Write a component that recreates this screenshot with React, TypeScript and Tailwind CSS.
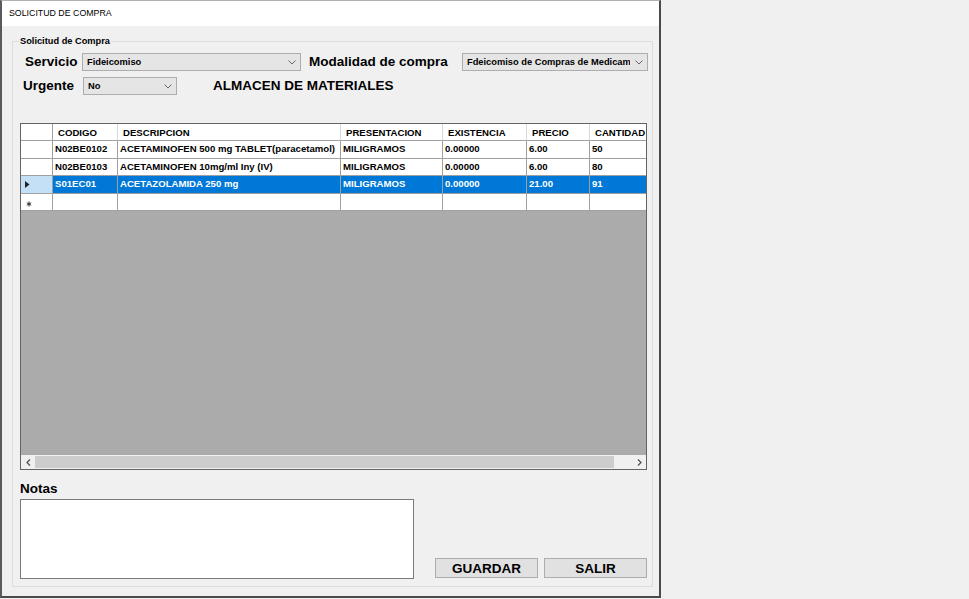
import React from "react";

const COLS = "grid grid-cols-[32px_65px_223px_102px_84px_63px_56px]";

function Chevron() {
  return (
    <svg width="8" height="5" viewBox="0 0 8 5" className="shrink-0">
      <polyline points="0.5,0.5 4,4 7.5,0.5" fill="none" stroke="#666" strokeWidth="1" />
    </svg>
  );
}

function Combo({ text, className }: { text: string; className: string }) {
  return (
    <div className={"h-[18px] border border-[#adadad] bg-[#e5e5e5] flex items-center pl-[4px] pr-[4px] " + className}>
      <span className="flex-1 mr-[5px] overflow-hidden whitespace-nowrap text-[9.3px] font-bold leading-[16px] text-black">{text}</span>
      <Chevron />
    </div>
  );
}

type Row = { h: string; cells: string[]; sel?: boolean; mark?: "arrow" | "star" | "" };

const rows: Row[] = [
  { h: "h-[18px]", cells: ["N02BE0102", "ACETAMINOFEN 500 mg TABLET(paracetamol)", "MILIGRAMOS", "0.00000", "6.00", "50"], mark: "" },
  { h: "h-[17px]", cells: ["N02BE0103", "ACETAMINOFEN 10mg/ml Iny (IV)", "MILIGRAMOS", "0.00000", "6.00", "80"], mark: "" },
  { h: "h-[18px]", cells: ["S01EC01", "ACETAZOLAMIDA 250 mg", "MILIGRAMOS", "0.00000", "21.00", "91"], sel: true, mark: "arrow" },
  { h: "h-[17px]", cells: ["", "", "", "", "", ""], mark: "star" },
];

const headers = ["CODIGO", "DESCRIPCION", "PRESENTACION", "EXISTENCIA", "PRECIO", "CANTIDAD"];

function DataGrid() {
  return (
    <div className="ml-[7px] mt-[28px] w-[627px] h-[347px] border border-[#646464] bg-[#ababab] flex flex-col overflow-hidden">
      <div className={COLS + " h-[17px] bg-white shrink-0"}>
        <div className="border-r border-b border-[#a0a0a0]" />
        {headers.map((t, i) => (
          <div
            key={t}
            className={
              "border-b border-[#a0a0a0] flex items-center pl-[5px] pt-[2px] overflow-hidden whitespace-nowrap text-[9.6px] font-bold text-black " +
              (i < headers.length - 1 ? "border-r border-r-[#d8d8d8]" : "")
            }
          >
            {t}
          </div>
        ))}
      </div>
      {rows.map((r, ri) => (
        <div key={ri} className={COLS + " shrink-0 " + r.h}>
          <div
            className={
              "border-r border-b border-[#a0a0a0] flex items-center pl-[4px] " + (r.sel ? "bg-[#c4e0f6]" : "bg-white")
            }
          >
            {r.mark === "arrow" && (
              <svg width="5" height="7" viewBox="0 0 5 7">
                <polygon points="0,0 4.5,3.5 0,7" fill="#222" />
              </svg>
            )}
            {r.mark === "star" && (
              <svg width="6" height="6" viewBox="0 0 6 6" className="ml-[1px] mt-[3px]">
                <path d="M3 0.5 V5.5 M0.8 1.8 L5.2 4.2 M5.2 1.8 L0.8 4.2" stroke="#333" strokeWidth="1" fill="none" />
              </svg>
            )}
          </div>
          {r.cells.map((c, ci) => (
            <div
              key={ci}
              className={
                "border-b border-[#a0a0a0] flex items-center pl-[2px] overflow-hidden whitespace-nowrap text-[9.6px] font-bold " +
                (ci < r.cells.length - 1 ? "border-r " : "") +
                (r.sel ? "bg-[#0078d7] text-white" : "bg-white text-black")
              }
            >
              {c}
            </div>
          ))}
        </div>
      ))}
      <div className="flex-1" />
      <div className="h-[14px] shrink-0 bg-[#f0f0f0] flex items-center">
        <div className="w-[14px] h-full flex items-center justify-center">
          <svg width="5" height="7" viewBox="0 0 5 7">
            <polyline points="4,0.5 1,3.5 4,6.5" fill="none" stroke="#555" strokeWidth="1.3" />
          </svg>
        </div>
        <div className="w-[579px] h-[12px] bg-[#cdcdcd]" />
        <div className="flex-1" />
        <div className="w-[14px] h-full flex items-center justify-center">
          <svg width="5" height="7" viewBox="0 0 5 7">
            <polyline points="1,0.5 4,3.5 1,6.5" fill="none" stroke="#555" strokeWidth="1.3" />
          </svg>
        </div>
      </div>
    </div>
  );
}

export default function App() {
  return (
    <div className="w-[969px] h-[599px] bg-[#f0f0f0] overflow-hidden font-['Liberation_Sans',Arial,sans-serif] text-black">
      <div className="w-[661px] h-[598px] flex flex-col border-l-2 border-r-2 border-b-2 border-t border-l-[#5a5a5a] border-r-[#4a4a4a] border-b-[#4a4a4a] border-t-[#b0b0b0]">
        <div className="h-[25px] bg-white flex items-center pl-[7px] shrink-0">
          <span className="text-[8.8px] leading-none text-black">SOLICITUD DE COMPRA</span>
        </div>
        <div className="flex-1 bg-[#f0f0f0] pt-[15px] pl-[10px]">
          <div className="relative w-[641px] h-[546px] border border-[#dcdcdc] flex flex-col">
            <span className="absolute left-[6px] top-[-7px] px-[1px] bg-[#f0f0f0] text-[9.25px] font-bold leading-[12px]">
              Solicitud de Compra
            </span>
            <div className="mt-[11px] h-[18px] flex items-center pl-[12px]">
              <span className="w-[57px] text-[13.5px] font-bold leading-[18px]">Servicio</span>
              <Combo text="Fideicomiso" className="w-[219px]" />
              <span className="ml-[8px] w-[153px] text-[13.5px] font-bold leading-[18px] whitespace-nowrap">Modalidad de compra</span>
              <Combo text="Fdeicomiso de Compras de Medicamentos" className="w-[186px]" />
            </div>
            <div className="mt-[6px] h-[18px] flex items-center pl-[10px]">
              <span className="w-[60px] text-[13.5px] font-bold leading-[18px]">Urgente</span>
              <Combo text="No" className="w-[94px]" />
              <span className="ml-[36px] text-[13.5px] font-bold leading-[18px] whitespace-nowrap">ALMACEN DE MATERIALES</span>
            </div>
            <DataGrid />
            <div className="flex items-end pl-[7px] mt-[10px]">
              <div className="flex flex-col">
                <span className="text-[13.5px] font-bold leading-[16px] pt-[1px]">Notas</span>
                <div className="mt-[2px] w-[394px] h-[80px] bg-white border border-[#7a7a7a]" />
              </div>
              <div className="ml-[21px] mb-[1px] flex gap-[6px]">
                <button className="w-[103px] h-[20px] bg-[#e1e1e1] border border-[#adadad] text-[13.5px] font-bold leading-[18px] pt-[1px] text-black">
                  GUARDAR
                </button>
                <button className="w-[103px] h-[20px] bg-[#e1e1e1] border border-[#adadad] text-[13.5px] font-bold leading-[18px] pt-[1px] text-black">
                  SALIR
                </button>
              </div>
            </div>
          </div>
        </div>
      </div>
    </div>
  );
}
